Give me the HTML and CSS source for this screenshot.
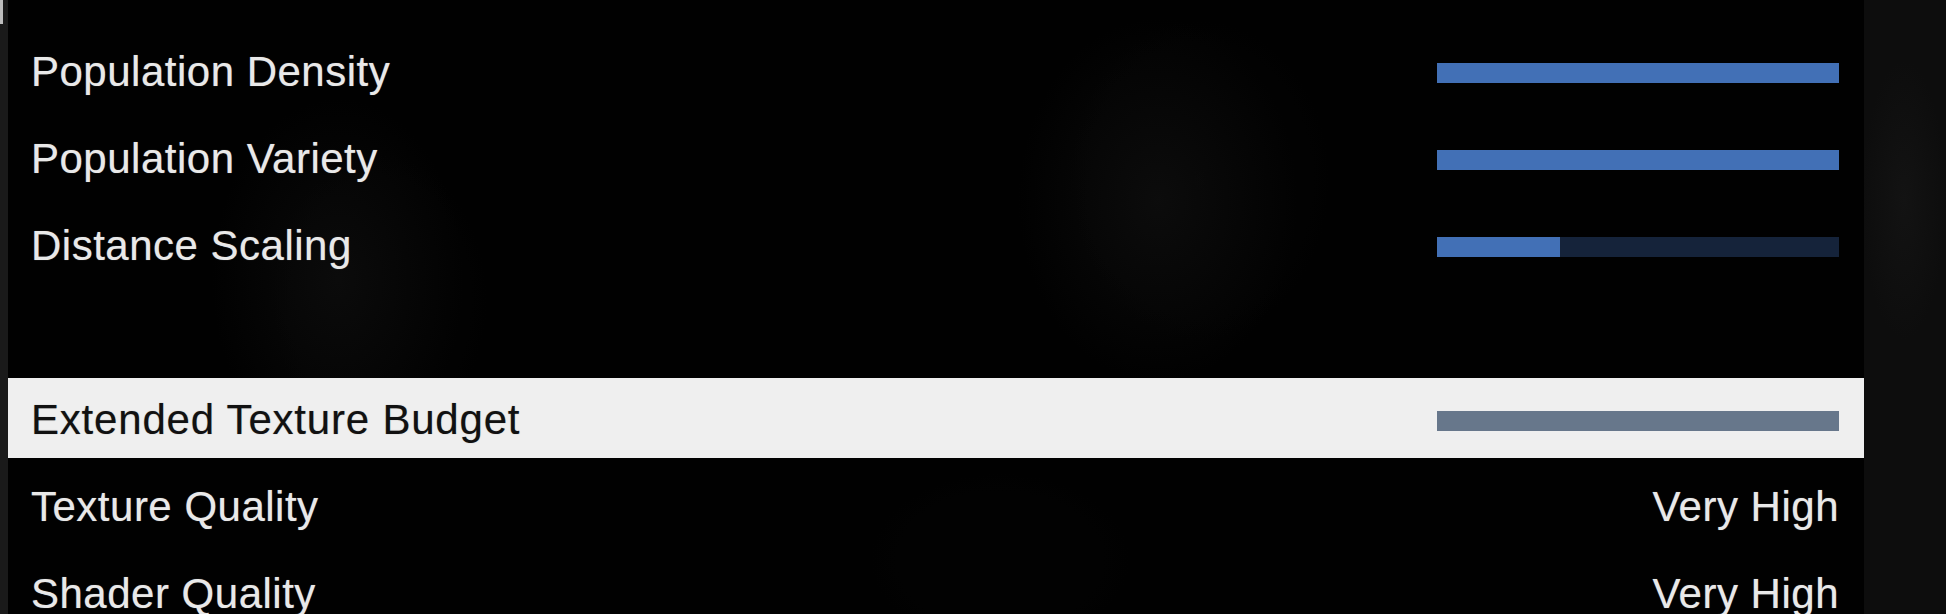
FILE: index.html
```html
<!DOCTYPE html>
<html lang="en">
<head>
<meta charset="utf-8">
<title>Graphics Settings</title>
<link rel="stylesheet" href="styles.css">
</head>
<body>
<div class="screen">
  <div class="edge"><span class="edge-mark"></span></div>
  <div class="panel">
    <div class="row">
      <span class="label">Population Density</span>
      <div class="slider"><div class="track"><div class="fill" style="width:100%"></div></div></div>
    </div>
    <div class="row">
      <span class="label">Population Variety</span>
      <div class="slider"><div class="track"><div class="fill" style="width:100%"></div></div></div>
    </div>
    <div class="row">
      <span class="label">Distance Scaling</span>
      <div class="slider"><div class="track"><div class="fill" style="width:30.6%"></div></div></div>
    </div>
    <div class="row row-empty"></div>
    <div class="row row-selected">
      <span class="label">Extended Texture Budget</span>
      <div class="slider"><div class="track"><div class="fill" style="width:100%"></div></div></div>
    </div>
    <div class="row">
      <span class="label">Texture Quality</span>
      <span class="value">Very High</span>
    </div>
    <div class="row">
      <span class="label">Shader Quality</span>
      <span class="value">Very High</span>
    </div>
  </div>
  <div class="side"></div>
</div>
</body>
</html>
```
FILE: styles.css
```css
html, body {
  margin: 0;
  padding: 0;
  background: #0b0b0b;
}

body {
  width: 1946px;
  height: 614px;
  overflow: hidden;
  font-family: "Liberation Sans", Arial, sans-serif;
}

.screen {
  display: flex;
  width: 1946px;
  height: 614px;
  background:
    radial-gradient(ellipse 260px 320px at 1200px 180px, rgba(40,40,40,0.35), transparent 70%),
    radial-gradient(ellipse 220px 300px at 380px 300px, rgba(38,38,38,0.35), transparent 70%),
    radial-gradient(ellipse 300px 200px at 1000px 560px, rgba(36,36,36,0.3), transparent 70%),
    #0a0a0a;
}

.edge {
  width: 8px;
  flex: none;
  background: #1a1a1a;
  display: flex;
  flex-direction: column;
}

.edge-mark {
  display: block;
  width: 3px;
  height: 24px;
  background: #bdbdbd;
}

.panel {
  width: 1856px;
  flex: none;
  padding-top: 30px;
  box-sizing: border-box;
  display: flex;
  flex-direction: column;
  gap: 7px;
  background:
    radial-gradient(ellipse 200px 260px at 1150px 200px, rgba(30,30,30,0.35), transparent 70%),
    radial-gradient(ellipse 180px 260px at 330px 280px, rgba(28,28,28,0.35), transparent 70%),
    rgba(0,0,0,0.86);
}

.side {
  flex: 1;
  background:
    radial-gradient(ellipse 60px 200px at 40px 200px, rgba(30,30,30,0.35), transparent 70%),
    #0d0d0d;
}

.row {
  height: 80px;
  flex: none;
  display: flex;
  align-items: center;
  justify-content: space-between;
  padding: 0 25px 0 23px;
  color: #e9e9e9;
  font-size: 42px;
  line-height: 70px;
  letter-spacing: 0.5px;
}

.row-selected {
  background: #efefef;
  color: #111111;
}

.row-selected .label {
  letter-spacing: 0.8px;
}

.label,
.value {
  white-space: nowrap;
  padding-top: 3px;
  text-shadow: 0 0 1px rgba(233,233,233,0.5);
}

.row-selected .label {
  text-shadow: 0 0 1px rgba(17,17,17,0.4);
}

.slider {
  width: 402px;
  height: 80px;
  display: flex;
  align-items: center;
  padding-top: 6px;
  box-sizing: border-box;
}

.track {
  width: 100%;
  height: 20px;
  background: #15233a;
  display: flex;
}

.fill {
  height: 100%;
  background: #4270b6;
}

.row-selected .track {
  background: #67778b;
}

.row-selected .fill {
  background: #67778b;
}
```
